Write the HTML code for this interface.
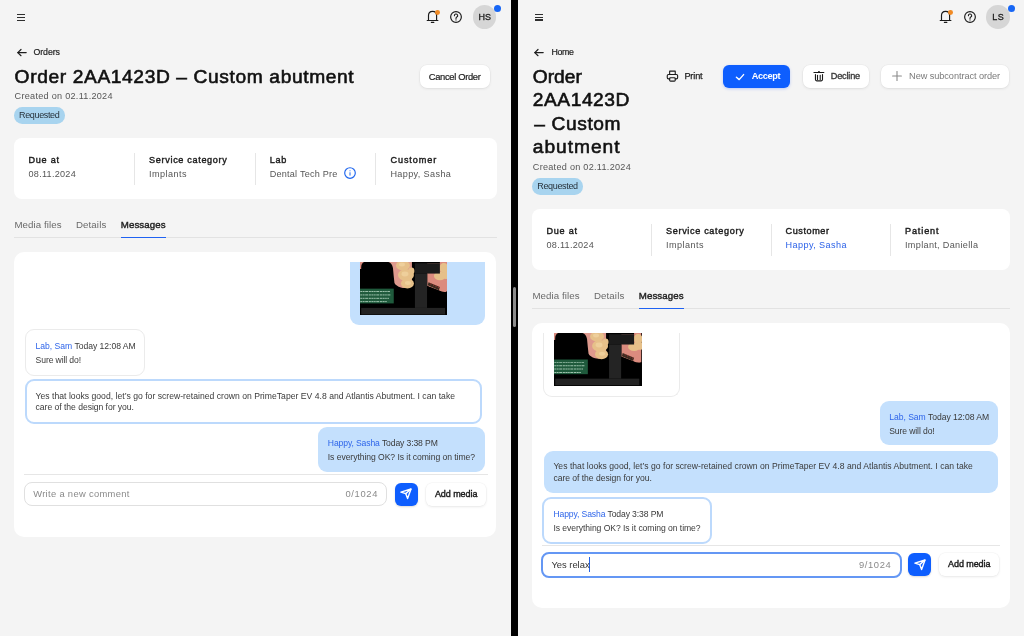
<!DOCTYPE html>
<html><head><meta charset="utf-8"><style>
html,body{margin:0;padding:0;width:1024px;height:636px;overflow:hidden;background:#f4f4f4;font-family:'Liberation Sans', sans-serif;}
div{box-sizing:border-box}
svg{position:absolute;overflow:visible}
</style></head><body>
<div style="position:absolute;left:0px;top:0px;width:511px;height:636px;background:#f4f4f4"></div><div style="position:absolute;left:17px;top:13.75px;width:8.1px;height:1.15px;background:#2e2e2e"></div><div style="position:absolute;left:17px;top:16.75px;width:8.1px;height:1.15px;background:#2e2e2e"></div><div style="position:absolute;left:17px;top:19.65px;width:8.1px;height:1.15px;background:#2e2e2e"></div><svg style="left:16.8px;top:49px" width="10" height="8" viewBox="0 0 10 8"><g stroke="#1e1e1e" stroke-width="1.2" fill="none" stroke-linecap="round" stroke-linejoin="round"><line x1="0.8" y1="3.6" x2="9.2" y2="3.6"/><polyline points="4,0.5 0.8,3.6 4,6.7"/></g></svg><div style="position:absolute;left:14px;top:107.1px;width:51px;height:16.5px;border-radius:8.25px;background:#a8d4ef"></div><div style="position:absolute;left:420px;top:65px;width:70px;height:23px;background:#fff;border-radius:7px;box-shadow:0 0 0 0.5px rgba(0,0,0,0.04), 0 1px 3px rgba(0,0,0,0.08)"></div><svg style="left:422px;top:6px" width="24" height="20" viewBox="0 0 24 20"><g stroke="#1a1a1a" stroke-width="1.15" fill="none" stroke-linecap="round" stroke-linejoin="round"><path d="M6.5 14.4 V9.6 C6.5 7 8.2 5.4 10.6 5.4 C13 5.4 14.6 7 14.6 9.6 V14.4"/><path d="M5.2 14.5 H15.9"/><path d="M9.4 16.4 H11.8"/></g></svg><div style="position:absolute;left:435.0px;top:9.9px;width:4.8px;height:4.8px;border-radius:50%;background:#f08a24"></div><svg style="left:449.2px;top:10.05px" width="14" height="14" viewBox="0 0 14 14"><circle cx="7" cy="7" r="5.35" stroke="#1a1a1a" stroke-width="1.15" fill="none"/><path d="M5.4 5.7 A1.65 1.65 0 1 1 7.8 7.1 Q7 7.5 7 8.5" stroke="#1a1a1a" stroke-width="1.1" fill="none" stroke-linecap="round"/><circle cx="7" cy="9.9" r="0.65" fill="#1a1a1a"/></svg><div style="position:absolute;left:472.9px;top:5.300000000000001px;width:23.6px;height:23.6px;border-radius:50%;background:#d6d6d6"></div><div style="position:absolute;left:494.4px;top:5.300000000000001px;width:7px;height:7px;border-radius:50%;background:#1766f5"></div><div style="position:absolute;left:14px;top:138px;width:482.5px;height:61px;background:#fff;border-radius:8px"></div><div style="position:absolute;left:134.125px;top:152.5px;width:1px;height:32px;background:#e6e6e6"></div><div style="position:absolute;left:254.75px;top:152.5px;width:1px;height:32px;background:#e6e6e6"></div><div style="position:absolute;left:375.375px;top:152.5px;width:1px;height:32px;background:#e6e6e6"></div><svg style="left:344.1px;top:167.2px" width="12" height="12" viewBox="0 0 12 12"><circle cx="6" cy="6" r="5.3" stroke="#1f66ee" stroke-width="1.15" fill="none"/><line x1="6" y1="5.3" x2="6" y2="8.6" stroke="#1f66ee" stroke-width="1.0"/><circle cx="6" cy="3.7" r="0.55" fill="#1f66ee"/></svg><div style="position:absolute;left:14px;top:237px;width:482.5px;height:1px;background:#e2e2e2"></div><div style="position:absolute;left:120.7px;top:236.9px;width:45.2px;height:1.3px;background:#1f62f2"></div><div style="position:absolute;left:14px;top:252px;width:482.3px;height:284.6px;background:#fff;border-radius:10px"></div><div style="position:absolute;left:349.7px;top:262px;width:135.1px;height:62.9px;background:#c4e0fd;border-radius:0 0 9px 9px"></div><div style="position:absolute;left:359.8px;top:262px;width:87.4px;height:52.89999999999998px;background:#000;overflow:hidden">
<svg style="left:0;top:0" width="87.4" height="52.89999999999998" viewBox="0 0 87.5 53" preserveAspectRatio="none">
<rect x="0" y="0" width="87.5" height="53" fill="#000"/>
<path d="M0 0 H5 V7 H0 Z" fill="#d98c80"/>
<path d="M1.2 53 V5.5 Q1.2 -0.5 7 -0.5 H27 Q32 -0.5 33 8 L34 46 Z" fill="#000"/>
<rect x="52" y="0" width="3.3" height="46" fill="#000"/>
<path d="M28.5 0 H52 V24 Q46 27 41 25.5 Q36 24 34.5 21 Q33.5 12 33 6 Q32 1 28.5 0 Z" fill="#de998d"/>
<g fill="#e6c089"><ellipse cx="43" cy="3.5" rx="7" ry="5"/><ellipse cx="46" cy="13" rx="8" ry="6"/><ellipse cx="47.5" cy="21.5" rx="6.5" ry="5"/><ellipse cx="51.5" cy="9" rx="3" ry="3.5"/></g>
<g fill="#f0d3a0" opacity="0.8"><ellipse cx="42" cy="2.5" rx="3" ry="2"/><ellipse cx="45" cy="12" rx="3.5" ry="2.5"/><ellipse cx="48" cy="21" rx="3" ry="2"/></g>
<path d="M67.3 0 H87.2 V29.5 Q84 31 79 28.5 L67.3 24 Z" fill="#db8b7e"/>
<g fill="#e6c089"><ellipse cx="84" cy="6" rx="4.5" ry="5"/><ellipse cx="80" cy="14" rx="6" ry="4.2"/><ellipse cx="86" cy="13" rx="3" ry="4"/></g>
<rect x="55" y="0" width="25" height="1.2" fill="#000"/>
<rect x="55" y="1.2" width="25" height="10.4" fill="#1b1b1b"/>
<rect x="55" y="11.6" width="12.3" height="34.4" fill="#242424"/>
<path d="M68.6 20.2 L80 25 L79 28.2 L67.8 23.4 Z" fill="#3b2b20"/>
<g fill="#a83232"><circle cx="71" cy="22" r="0.6"/><circle cx="73.6" cy="23.1" r="0.6"/><circle cx="76.1" cy="24.2" r="0.6"/><circle cx="78.5" cy="25.2" r="0.6"/></g>
<path d="M67.3 24 L79 28.5 Q84 31 87.2 29.5 V46 H67.3 Z" fill="#000"/>
<rect x="0" y="26.7" width="33.8" height="14.8" fill="#1f5a3c"/>
<g stroke="#b5d6c2" stroke-width="1.0" stroke-dasharray="2.2 0.5 1.6 0.6 3 0.7 2 0.5" opacity="0.85"><line x1="0.3" y1="29.6" x2="30" y2="29.6"/><line x1="0.3" y1="33" x2="31" y2="33"/><line x1="0.3" y1="36.4" x2="29" y2="36.4"/><line x1="0.3" y1="39.7" x2="27" y2="39.7"/></g>
<rect x="1.2" y="46" width="84" height="6.6" fill="#232323"/>
</svg></div><div style="position:absolute;left:24.7px;top:328.7px;width:120.8px;height:47px;border:1.5px solid #ebebeb;border-radius:9px;background:#fff"></div><div style="position:absolute;left:24.7px;top:378.5px;width:457.3px;height:45px;border:2px solid #bcd9fc;border-radius:9px;background:#fff"></div><div style="position:absolute;left:318.4px;top:427.1px;width:166.3px;height:44.8px;background:#c4e0fd;border-radius:9px"></div><div style="position:absolute;left:24px;top:473.8px;width:463.5px;height:1px;background:#e6e6e6"></div><div style="position:absolute;left:24px;top:482.3px;width:363.3px;height:23.3px;background:#fff;border-radius:8px;border:1px solid #e0e0e0"></div><div style="position:absolute;left:394.8px;top:482.5px;width:23.3px;height:23.1px;background:#0e5efe;border-radius:6px;box-shadow:0 1px 2px rgba(0,0,0,0.15)"></div><svg style="left:400.45px;top:488.05px" width="12" height="12" viewBox="0 0 12 12"><g stroke="#fff" stroke-width="1.4" fill="none" stroke-linejoin="round" stroke-linecap="round"><path d="M0.9 4.2 L11 1 L7.6 10.6 L5.7 5.6 Z"/><line x1="5.7" y1="5.6" x2="10.8" y2="1.2"/></g></svg><div style="position:absolute;left:425.7px;top:482.5px;width:60.6px;height:23.1px;background:#fff;border-radius:6px;box-shadow:0 0 0 0.5px rgba(0,0,0,0.04), 0 1px 3px rgba(0,0,0,0.08)"></div><div style="position:absolute;left:511px;top:0px;width:7px;height:636px;background:#000"></div><div style="position:absolute;left:513px;top:287.3px;width:3.2px;height:39.4px;background:#8c8c8c;border-radius:2px"></div><div style="position:absolute;left:518px;top:0px;width:506px;height:636px;background:#f4f4f4"></div><div style="position:absolute;left:535.1px;top:13.549999999999999px;width:8.1px;height:1.15px;background:#2e2e2e"></div><div style="position:absolute;left:535.1px;top:16.549999999999997px;width:8.1px;height:1.15px;background:#2e2e2e"></div><div style="position:absolute;left:535.1px;top:19.45px;width:8.1px;height:1.15px;background:#2e2e2e"></div><svg style="left:534.4px;top:49.2px" width="10" height="8" viewBox="0 0 10 8"><g stroke="#1e1e1e" stroke-width="1.2" fill="none" stroke-linecap="round" stroke-linejoin="round"><line x1="0.8" y1="3.6" x2="9.2" y2="3.6"/><polyline points="4,0.5 0.8,3.6 4,6.7"/></g></svg><div style="position:absolute;left:532.1px;top:178.4px;width:50.7px;height:16.4px;border-radius:8.2px;background:#a8d4ef"></div><svg style="left:662px;top:66px" width="20" height="20" viewBox="0 0 20 20"><g stroke="#1a1a1a" stroke-width="1.1" fill="none" stroke-linejoin="round" stroke-linecap="round"><path d="M7.65 8.4 V5.15 H13.25 V8.4"/><path d="M7.6 12.9 H6.5 Q5.25 12.9 5.25 11.6 V9.8 Q5.25 8.55 6.5 8.55 H14.4 Q15.65 8.55 15.65 9.8 V11.6 Q15.65 12.9 14.4 12.9 H13.3"/><rect x="7.65" y="11.75" width="5.6" height="3.4" rx="0.9"/></g></svg><div style="position:absolute;left:723.3px;top:64.7px;width:67px;height:23.2px;background:#0e5efe;border-radius:6px;box-shadow:0 1px 3px rgba(20,80,255,0.25)"></div><svg style="left:735px;top:72.5px" width="10" height="8" viewBox="0 0 10 8"><polyline points="1.4,4.2 4.2,6.6 8.6,1.6" stroke="#fff" stroke-width="1.4" fill="none" stroke-linecap="round" stroke-linejoin="round"/></svg><div style="position:absolute;left:803.2px;top:65px;width:66px;height:23px;background:#fff;border-radius:7px;box-shadow:0 0 0 0.5px rgba(0,0,0,0.04), 0 1px 3px rgba(0,0,0,0.08)"></div><svg style="left:809px;top:66px" width="20" height="20" viewBox="0 0 20 20"><g stroke="#1a1a1a" stroke-width="1.1" fill="none" stroke-linecap="round" stroke-linejoin="round"><path d="M4.95 6.45 H14.85"/><path d="M6.45 8.6 V13.6 Q6.45 14.85 7.7 14.85 H12.25 Q13.5 14.85 13.5 13.6 V8.6"/><path d="M8.5 9.4 V13.4"/><path d="M11.2 9.4 V13.4"/></g><ellipse cx="9.95" cy="5.8" rx="0.95" ry="0.7" fill="#1a1a1a"/></svg><div style="position:absolute;left:880.8px;top:65px;width:128.3px;height:23px;background:#fff;border-radius:7px;box-shadow:0 0 0 0.5px rgba(0,0,0,0.04), 0 1px 3px rgba(0,0,0,0.08)"></div><svg style="left:892px;top:71.2px" width="10" height="10" viewBox="0 0 10 10"><g stroke="#8a8a8a" stroke-width="1.1" stroke-linecap="round"><line x1="5" y1="0.6" x2="5" y2="9.4"/><line x1="0.6" y1="5" x2="9.4" y2="5"/></g></svg><svg style="left:935.3px;top:6px" width="24" height="20" viewBox="0 0 24 20"><g stroke="#1a1a1a" stroke-width="1.15" fill="none" stroke-linecap="round" stroke-linejoin="round"><path d="M6.5 14.4 V9.6 C6.5 7 8.2 5.4 10.6 5.4 C13 5.4 14.6 7 14.6 9.6 V14.4"/><path d="M5.2 14.5 H15.9"/><path d="M9.4 16.4 H11.8"/></g></svg><div style="position:absolute;left:948.3000000000001px;top:9.9px;width:4.8px;height:4.8px;border-radius:50%;background:#f08a24"></div><svg style="left:962.6px;top:10px" width="14" height="14" viewBox="0 0 14 14"><circle cx="7" cy="7" r="5.35" stroke="#1a1a1a" stroke-width="1.15" fill="none"/><path d="M5.4 5.7 A1.65 1.65 0 1 1 7.8 7.1 Q7 7.5 7 8.5" stroke="#1a1a1a" stroke-width="1.1" fill="none" stroke-linecap="round"/><circle cx="7" cy="9.9" r="0.65" fill="#1a1a1a"/></svg><div style="position:absolute;left:986.1px;top:5.199999999999999px;width:23.6px;height:23.6px;border-radius:50%;background:#d6d6d6"></div><div style="position:absolute;left:1007.6px;top:5.1px;width:7px;height:7px;border-radius:50%;background:#1766f5"></div><div style="position:absolute;left:532px;top:209px;width:478px;height:61px;background:#fff;border-radius:8px"></div><div style="position:absolute;left:651.0px;top:223.5px;width:1px;height:32px;background:#e6e6e6"></div><div style="position:absolute;left:770.5px;top:223.5px;width:1px;height:32px;background:#e6e6e6"></div><div style="position:absolute;left:890.0px;top:223.5px;width:1px;height:32px;background:#e6e6e6"></div><div style="position:absolute;left:532px;top:308px;width:478px;height:1px;background:#e2e2e2"></div><div style="position:absolute;left:638.7px;top:307.9px;width:45.2px;height:1.3px;background:#1f62f2"></div><div style="position:absolute;left:532px;top:323px;width:478px;height:284.8px;background:#fff;border-radius:10px"></div><div style="position:absolute;left:543.3px;top:333px;width:137px;height:64.2px;border:1.5px solid #ebebeb;border-top:none;border-radius:0 0 9px 9px;background:#fff"></div><div style="position:absolute;left:554.1px;top:333px;width:87.6px;height:52.60000000000002px;background:#000;overflow:hidden">
<svg style="left:0;top:0" width="87.6" height="52.60000000000002" viewBox="0 0 87.5 53" preserveAspectRatio="none">
<rect x="0" y="0" width="87.5" height="53" fill="#000"/>
<path d="M0 0 H5 V7 H0 Z" fill="#d98c80"/>
<path d="M1.2 53 V5.5 Q1.2 -0.5 7 -0.5 H27 Q32 -0.5 33 8 L34 46 Z" fill="#000"/>
<rect x="52" y="0" width="3.3" height="46" fill="#000"/>
<path d="M28.5 0 H52 V24 Q46 27 41 25.5 Q36 24 34.5 21 Q33.5 12 33 6 Q32 1 28.5 0 Z" fill="#de998d"/>
<g fill="#e6c089"><ellipse cx="43" cy="3.5" rx="7" ry="5"/><ellipse cx="46" cy="13" rx="8" ry="6"/><ellipse cx="47.5" cy="21.5" rx="6.5" ry="5"/><ellipse cx="51.5" cy="9" rx="3" ry="3.5"/></g>
<g fill="#f0d3a0" opacity="0.8"><ellipse cx="42" cy="2.5" rx="3" ry="2"/><ellipse cx="45" cy="12" rx="3.5" ry="2.5"/><ellipse cx="48" cy="21" rx="3" ry="2"/></g>
<path d="M67.3 0 H87.2 V29.5 Q84 31 79 28.5 L67.3 24 Z" fill="#db8b7e"/>
<g fill="#e6c089"><ellipse cx="84" cy="6" rx="4.5" ry="5"/><ellipse cx="80" cy="14" rx="6" ry="4.2"/><ellipse cx="86" cy="13" rx="3" ry="4"/></g>
<rect x="55" y="0" width="25" height="1.2" fill="#000"/>
<rect x="55" y="1.2" width="25" height="10.4" fill="#1b1b1b"/>
<rect x="55" y="11.6" width="12.3" height="34.4" fill="#242424"/>
<path d="M68.6 20.2 L80 25 L79 28.2 L67.8 23.4 Z" fill="#3b2b20"/>
<g fill="#a83232"><circle cx="71" cy="22" r="0.6"/><circle cx="73.6" cy="23.1" r="0.6"/><circle cx="76.1" cy="24.2" r="0.6"/><circle cx="78.5" cy="25.2" r="0.6"/></g>
<path d="M67.3 24 L79 28.5 Q84 31 87.2 29.5 V46 H67.3 Z" fill="#000"/>
<rect x="0" y="26.7" width="33.8" height="14.8" fill="#1f5a3c"/>
<g stroke="#b5d6c2" stroke-width="1.0" stroke-dasharray="2.2 0.5 1.6 0.6 3 0.7 2 0.5" opacity="0.85"><line x1="0.3" y1="29.6" x2="30" y2="29.6"/><line x1="0.3" y1="33" x2="31" y2="33"/><line x1="0.3" y1="36.4" x2="29" y2="36.4"/><line x1="0.3" y1="39.7" x2="27" y2="39.7"/></g>
<rect x="1.2" y="46" width="84" height="6.6" fill="#232323"/>
</svg></div><div style="position:absolute;left:879.8px;top:401.3px;width:118.1px;height:44.1px;background:#c4e0fd;border-radius:9px"></div><div style="position:absolute;left:543.8px;top:450.6px;width:454.1px;height:42.2px;background:#c4e0fd;border-radius:9px"></div><div style="position:absolute;left:542.1px;top:496.6px;width:169.5px;height:47px;border:2px solid #bcd9fc;border-radius:9px;background:#fff"></div><div style="position:absolute;left:542px;top:545.2px;width:458px;height:1px;background:#e6e6e6"></div><div style="position:absolute;left:540.5px;top:552px;width:361.1px;height:25.9px;background:#fff;border-radius:8px;border:2px solid #6497f4"></div><div style="position:absolute;left:907.9px;top:553.1px;width:23.3px;height:23.4px;background:#0e5efe;border-radius:6px;box-shadow:0 1px 2px rgba(0,0,0,0.15)"></div><svg style="left:913.55px;top:558.8000000000001px" width="12" height="12" viewBox="0 0 12 12"><g stroke="#fff" stroke-width="1.4" fill="none" stroke-linejoin="round" stroke-linecap="round"><path d="M0.9 4.2 L11 1 L7.6 10.6 L5.7 5.6 Z"/><line x1="5.7" y1="5.6" x2="10.8" y2="1.2"/></g></svg><div style="position:absolute;left:938.8px;top:553.1px;width:60.6px;height:23.4px;background:#fff;border-radius:6px;box-shadow:0 0 0 0.5px rgba(0,0,0,0.04), 0 1px 3px rgba(0,0,0,0.08)"></div><div style="position:absolute;left:589.2px;top:557.3px;width:1.1px;height:14.9px;background:#2463e6"></div>
<div style="position:absolute;left:0;top:0;width:1024px;height:636px;will-change:transform"><div style="position:absolute;left:33.50px;top:48.32px;font-size:8.8px;line-height:1;font-weight:400;color:#222;letter-spacing:-0.078px;white-space:nowrap;-webkit-text-stroke-width:0.2px;">Orders</div><div style="position:absolute;left:14.60px;top:66.88px;font-size:19.2px;line-height:1;font-weight:400;color:#111;letter-spacing:0.617px;white-space:nowrap;-webkit-text-stroke-width:0.6px;">Order 2AA1423D – Custom abutment</div><div style="position:absolute;left:14.60px;top:91.77px;font-size:9.1px;line-height:1;font-weight:400;color:#565656;letter-spacing:0.277px;white-space:nowrap;">Created on 02.11.2024</div><div style="position:absolute;left:19.00px;top:111.15px;font-size:9.0px;line-height:1;font-weight:400;color:#27323b;letter-spacing:-0.343px;white-space:nowrap;">Requested</div><div style="position:absolute;left:428.70px;top:71.81px;font-size:9.4px;line-height:1;font-weight:400;color:#222;letter-spacing:-0.324px;white-space:nowrap;-webkit-text-stroke-width:0.2px;">Cancel Order</div><div style="position:absolute;left:478.50px;top:12.95px;font-size:9.0px;line-height:1;font-weight:400;color:#1a1a1a;letter-spacing:-0.016px;white-space:nowrap;-webkit-text-stroke-width:0.3px;">HS</div><div style="position:absolute;left:28.50px;top:156.17px;font-size:9.1px;line-height:1;font-weight:400;color:#1b1b1b;letter-spacing:0.741px;white-space:nowrap;-webkit-text-stroke-width:0.4px;">Due at</div><div style="position:absolute;left:28.50px;top:169.87px;font-size:9.1px;line-height:1;font-weight:400;color:#565656;letter-spacing:0.262px;white-space:nowrap;">08.11.2024</div><div style="position:absolute;left:149.12px;top:156.17px;font-size:9.1px;line-height:1;font-weight:400;color:#1b1b1b;letter-spacing:0.664px;white-space:nowrap;-webkit-text-stroke-width:0.4px;">Service category</div><div style="position:absolute;left:149.12px;top:169.87px;font-size:9.1px;line-height:1;font-weight:400;color:#565656;letter-spacing:0.446px;white-space:nowrap;">Implants</div><div style="position:absolute;left:269.75px;top:156.17px;font-size:9.1px;line-height:1;font-weight:400;color:#1b1b1b;letter-spacing:0.656px;white-space:nowrap;-webkit-text-stroke-width:0.4px;">Lab</div><div style="position:absolute;left:269.75px;top:169.87px;font-size:9.1px;line-height:1;font-weight:400;color:#565656;letter-spacing:0.218px;white-space:nowrap;">Dental Tech Pre</div><div style="position:absolute;left:390.38px;top:156.17px;font-size:9.1px;line-height:1;font-weight:400;color:#1b1b1b;letter-spacing:0.940px;white-space:nowrap;-webkit-text-stroke-width:0.4px;">Customer</div><div style="position:absolute;left:390.38px;top:169.87px;font-size:9.1px;line-height:1;font-weight:400;color:#565656;letter-spacing:0.368px;white-space:nowrap;">Happy, Sasha</div><div style="position:absolute;left:14.40px;top:220.06px;font-size:9.7px;line-height:1;font-weight:400;color:#6a6a6a;letter-spacing:0.079px;white-space:nowrap;">Media files</div><div style="position:absolute;left:75.90px;top:220.06px;font-size:9.7px;line-height:1;font-weight:400;color:#6a6a6a;letter-spacing:0.129px;white-space:nowrap;">Details</div><div style="position:absolute;left:120.80px;top:220.06px;font-size:9.7px;line-height:1;font-weight:400;color:#222;letter-spacing:0.092px;white-space:nowrap;-webkit-text-stroke-width:0.4px;">Messages</div><div style="position:absolute;left:35.60px;top:341.59px;font-size:8.6px;line-height:1;font-weight:400;color:#3a3a3a;letter-spacing:-0.026px;white-space:nowrap;"><span style="color:#2f66ea">Lab, Sam</span> Today 12:08 AM</div><div style="position:absolute;left:35.60px;top:355.79px;font-size:8.6px;line-height:1;font-weight:400;color:#3a3a3a;letter-spacing:-0.109px;white-space:nowrap;">Sure will do!</div><div style="position:absolute;left:35.60px;top:391.59px;font-size:8.6px;line-height:1;font-weight:400;color:#3a3a3a;letter-spacing:0.022px;white-space:nowrap;">Yes that looks good, let’s go for screw-retained crown on PrimeTaper EV 4.8 and Atlantis Abutment. I can take</div><div style="position:absolute;left:35.60px;top:403.09px;font-size:8.6px;line-height:1;font-weight:400;color:#3a3a3a;letter-spacing:-0.037px;white-space:nowrap;">care of the design for you.</div><div style="position:absolute;left:327.80px;top:438.89px;font-size:8.6px;line-height:1;font-weight:400;color:#3a3a3a;letter-spacing:-0.115px;white-space:nowrap;"><span style="color:#2f66ea">Happy, Sasha</span> Today 3:38 PM</div><div style="position:absolute;left:327.80px;top:452.99px;font-size:8.6px;line-height:1;font-weight:400;color:#3a3a3a;letter-spacing:-0.061px;white-space:nowrap;">Is everything OK? Is it coming on time?</div><div style="position:absolute;left:33.20px;top:489.26px;font-size:9.4px;line-height:1;font-weight:400;color:#8a8a8a;letter-spacing:0.318px;white-space:nowrap;">Write a new comment</div><div style="position:absolute;left:345.50px;top:489.26px;font-size:9.4px;line-height:1;font-weight:400;color:#8a8a8a;letter-spacing:0.642px;white-space:nowrap;">0/1024</div><div style="position:absolute;left:434.90px;top:489.70px;font-size:9.0px;line-height:1;font-weight:400;color:#1b1b1b;letter-spacing:-0.066px;white-space:nowrap;-webkit-text-stroke-width:0.4px;">Add media</div><div style="position:absolute;left:551.50px;top:48.42px;font-size:8.8px;line-height:1;font-weight:400;color:#222;letter-spacing:-0.323px;white-space:nowrap;-webkit-text-stroke-width:0.2px;">Home</div><div style="position:absolute;left:532.80px;top:66.78px;font-size:19.2px;line-height:1;font-weight:400;color:#111;letter-spacing:0.000px;white-space:nowrap;-webkit-text-stroke-width:0.6px;">Order</div><div style="position:absolute;left:532.80px;top:90.28px;font-size:19.2px;line-height:1;font-weight:400;color:#111;letter-spacing:0.541px;white-space:nowrap;-webkit-text-stroke-width:0.6px;">2AA1423D</div><div style="position:absolute;left:534.30px;top:113.78px;font-size:19.2px;line-height:1;font-weight:400;color:#111;letter-spacing:0.599px;white-space:nowrap;-webkit-text-stroke-width:0.6px;">– Custom</div><div style="position:absolute;left:532.80px;top:137.28px;font-size:19.2px;line-height:1;font-weight:400;color:#111;letter-spacing:0.955px;white-space:nowrap;-webkit-text-stroke-width:0.6px;">abutment</div><div style="position:absolute;left:532.80px;top:163.17px;font-size:9.1px;line-height:1;font-weight:400;color:#565656;letter-spacing:0.277px;white-space:nowrap;">Created on 02.11.2024</div><div style="position:absolute;left:537.30px;top:182.45px;font-size:9.0px;line-height:1;font-weight:400;color:#27323b;letter-spacing:-0.343px;white-space:nowrap;">Requested</div><div style="position:absolute;left:684.40px;top:71.98px;font-size:9.2px;line-height:1;font-weight:400;color:#222;letter-spacing:-0.152px;white-space:nowrap;-webkit-text-stroke-width:0.25px;">Print</div><div style="position:absolute;left:751.70px;top:72.08px;font-size:9.2px;line-height:1;font-weight:700;color:#fff;letter-spacing:-0.328px;white-space:nowrap;">Accept</div><div style="position:absolute;left:830.70px;top:72.08px;font-size:9.2px;line-height:1;font-weight:400;color:#3a3a3a;letter-spacing:-0.190px;white-space:nowrap;-webkit-text-stroke-width:0.35px;">Decline</div><div style="position:absolute;left:909.10px;top:72.08px;font-size:9.2px;line-height:1;font-weight:400;color:#7a7a7a;letter-spacing:-0.072px;white-space:nowrap;">New subcontract order</div><div style="position:absolute;left:992.30px;top:12.85px;font-size:9.0px;line-height:1;font-weight:400;color:#1a1a1a;letter-spacing:0.484px;white-space:nowrap;-webkit-text-stroke-width:0.3px;">LS</div><div style="position:absolute;left:546.50px;top:227.17px;font-size:9.1px;line-height:1;font-weight:400;color:#1b1b1b;letter-spacing:0.741px;white-space:nowrap;-webkit-text-stroke-width:0.4px;">Due at</div><div style="position:absolute;left:546.50px;top:240.87px;font-size:9.1px;line-height:1;font-weight:400;color:#565656;letter-spacing:0.262px;white-space:nowrap;">08.11.2024</div><div style="position:absolute;left:666.00px;top:227.17px;font-size:9.1px;line-height:1;font-weight:400;color:#1b1b1b;letter-spacing:0.664px;white-space:nowrap;-webkit-text-stroke-width:0.4px;">Service category</div><div style="position:absolute;left:666.00px;top:240.87px;font-size:9.1px;line-height:1;font-weight:400;color:#565656;letter-spacing:0.446px;white-space:nowrap;">Implants</div><div style="position:absolute;left:785.50px;top:227.17px;font-size:9.1px;line-height:1;font-weight:400;color:#1b1b1b;letter-spacing:0.583px;white-space:nowrap;-webkit-text-stroke-width:0.4px;">Customer</div><div style="position:absolute;left:785.50px;top:240.87px;font-size:9.1px;line-height:1;font-weight:400;color:#2c62e8;letter-spacing:0.413px;white-space:nowrap;">Happy, Sasha</div><div style="position:absolute;left:905.00px;top:227.17px;font-size:9.1px;line-height:1;font-weight:400;color:#1b1b1b;letter-spacing:0.865px;white-space:nowrap;-webkit-text-stroke-width:0.4px;">Patient</div><div style="position:absolute;left:905.00px;top:240.87px;font-size:9.1px;line-height:1;font-weight:400;color:#565656;letter-spacing:0.329px;white-space:nowrap;">Implant, Daniella</div><div style="position:absolute;left:532.40px;top:291.06px;font-size:9.7px;line-height:1;font-weight:400;color:#6a6a6a;letter-spacing:0.079px;white-space:nowrap;">Media files</div><div style="position:absolute;left:593.90px;top:291.06px;font-size:9.7px;line-height:1;font-weight:400;color:#6a6a6a;letter-spacing:0.129px;white-space:nowrap;">Details</div><div style="position:absolute;left:638.80px;top:291.06px;font-size:9.7px;line-height:1;font-weight:400;color:#222;letter-spacing:0.092px;white-space:nowrap;-webkit-text-stroke-width:0.4px;">Messages</div><div style="position:absolute;left:889.20px;top:412.69px;font-size:8.6px;line-height:1;font-weight:400;color:#3a3a3a;letter-spacing:-0.028px;white-space:nowrap;"><span style="color:#2f66ea">Lab, Sam</span> Today 12:08 AM</div><div style="position:absolute;left:889.20px;top:426.69px;font-size:8.6px;line-height:1;font-weight:400;color:#3a3a3a;letter-spacing:-0.109px;white-space:nowrap;">Sure will do!</div><div style="position:absolute;left:553.40px;top:462.29px;font-size:8.6px;line-height:1;font-weight:400;color:#3a3a3a;letter-spacing:0.022px;white-space:nowrap;">Yes that looks good, let’s go for screw-retained crown on PrimeTaper EV 4.8 and Atlantis Abutment. I can take</div><div style="position:absolute;left:553.40px;top:474.19px;font-size:8.6px;line-height:1;font-weight:400;color:#3a3a3a;letter-spacing:-0.037px;white-space:nowrap;">care of the design for you.</div><div style="position:absolute;left:553.40px;top:510.09px;font-size:8.6px;line-height:1;font-weight:400;color:#3a3a3a;letter-spacing:-0.115px;white-space:nowrap;"><span style="color:#2f66ea">Happy, Sasha</span> Today 3:38 PM</div><div style="position:absolute;left:553.40px;top:523.99px;font-size:8.6px;line-height:1;font-weight:400;color:#3a3a3a;letter-spacing:-0.061px;white-space:nowrap;">Is everything OK? Is it coming on time?</div><div style="position:absolute;left:551.40px;top:560.26px;font-size:9.4px;line-height:1;font-weight:400;color:#333;letter-spacing:-0.002px;white-space:nowrap;">Yes relax</div><div style="position:absolute;left:858.90px;top:560.26px;font-size:9.4px;line-height:1;font-weight:400;color:#8a8a8a;letter-spacing:0.623px;white-space:nowrap;">9/1024</div><div style="position:absolute;left:948.00px;top:560.45px;font-size:9.0px;line-height:1;font-weight:400;color:#1b1b1b;letter-spacing:-0.066px;white-space:nowrap;-webkit-text-stroke-width:0.4px;">Add media</div></div>
</body></html>
